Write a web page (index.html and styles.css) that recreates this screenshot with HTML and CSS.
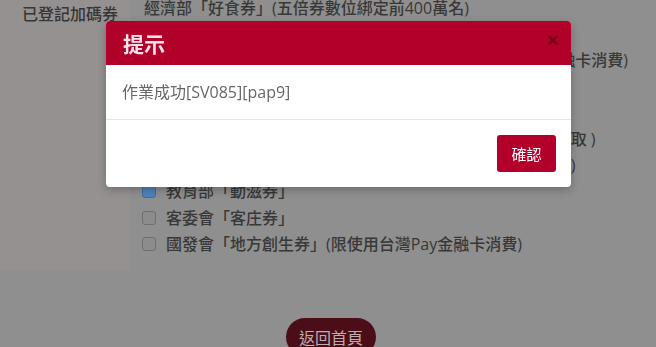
FILE: index.html
```html
<!DOCTYPE html>
<html lang="zh-Hant">
<head>
<meta charset="utf-8">
<title>提示</title>
<link rel="stylesheet" href="styles.css">
</head>
<body>
<div class="page">
  <div class="left">
    <div class="label">已登記加碼券</div>
  </div>
  <div class="right">
    <div class="row">經濟部「好食券」(五倍券數位綁定前400萬名)</div>
    <div class="row">農業部「農遊券」</div>
    <div class="row">經濟部「好食券」(五倍券數位綁定加碼，限使用台灣Pay金融卡消費)</div>
    <div class="row">文化部「藝FUN券」(數位)</div>
    <div class="row">可登記加碼券</div>
    <div class="row check"><span class="box"></span>文化部「藝FUN券」(紙本，限於指定全國各地超商門市領取 )</div>
    <div class="row check"><span class="box"></span>內政部「國旅券」(限於國內合法旅宿業者及觀光遊樂業用)</div>
    <div class="row check"><span class="box checked"></span>教育部「動滋券」</div>
    <div class="row check"><span class="box"></span>客委會「客庄券」</div>
    <div class="row check"><span class="box"></span>國發會「地方創生券」(限使用台灣Pay金融卡消費)</div>
  </div>
</div>
<div class="actions">
  <button class="home">返回首頁</button>
</div>

<div class="modal">
  <div class="modal-header">
    <div class="modal-title">提示</div>
    <span class="close">×</span>
  </div>
  <div class="modal-body">作業成功[SV085][pap9]</div>
  <div class="modal-footer">
    <button class="ok">確認</button>
  </div>
</div>
</body>
</html>
```
FILE: styles.css
```css
* { box-sizing: border-box; }
html, body { margin: 0; padding: 0; }
body {
  background: #8f8f8f;
  font-family: "Open Sans", "Noto Sans CJK TC", sans-serif;
  width: 656px;
  height: 347px;
  overflow: hidden;
}
.page {
  display: grid;
  grid-template-columns: 130px 1fr;
  margin-top: -5px;
}
.left {
  background: #959190;
  padding: 6px 0 0 22px;
}
.label {
  font-size: 16px;
  font-weight: 500;
  line-height: 26px;
  color: #363636;
  white-space: nowrap;
}
.right {
  padding: 0 0 13px 14px;
}
.row {
  font-size: 16px;
  font-weight: 500;
  line-height: 26.2px;
  height: 26.2px;
  color: #383838;
  white-space: nowrap;
}
.row.check {
  display: flex;
  align-items: center;
  gap: 10px;
  margin-left: -2px;
}
.box {
  width: 14px;
  height: 14px;
  border: 1px solid #6e6e6e;
  border-radius: 3px;
  background: #8c8c8c;
  flex: none;
}
.box.checked {
  background: #4f82bb;
  border-color: #3f6d9f;
}
.actions {
  display: flex;
  justify-content: center;
  padding-left: 6px;
  margin-top: 48px;
}
.home {
  width: 90px;
  height: 38px;
  border: none;
  border-radius: 19px;
  background: #4b0d18;
  color: #bdb0b2;
  font-family: "Noto Sans CJK TC", sans-serif;
  font-size: 16px;
  line-height: 38px;
  padding: 0;
}
.modal {
  position: fixed;
  left: 106px;
  top: 21px;
  width: 465px;
  background: #fff;
  border-radius: 4px;
  overflow: hidden;
  box-shadow: 0 3px 9px rgba(0,0,0,0.25);
}
.modal-header {
  height: 44px;
  background: #b1002a;
  display: flex;
  align-items: center;
  justify-content: space-between;
  padding: 0 12px 0 17px;
}
.modal-title {
  font-family: "Noto Sans CJK TC", sans-serif;
  font-size: 21px;
  font-weight: 700;
  color: #fbe4e9;
  line-height: 44px;
}
.close {
  font-family: "Liberation Sans", sans-serif;
  font-size: 21px;
  font-weight: 700;
  color: #76001c;
  line-height: 1;
  align-self: flex-start;
  margin-top: 8px;
}
.modal-body {
  padding: 16px;
  font-size: 16px;
  line-height: 22px;
  color: #666;
  border-bottom: 1px solid #e5e5e5;
}
.modal-footer {
  display: flex;
  justify-content: flex-end;
  padding: 15px;
}
.ok {
  width: 59px;
  height: 37px;
  border: none;
  border-radius: 3px;
  background: #b3002b;
  color: #fff;
  font-family: "Noto Sans CJK TC", sans-serif;
  font-size: 15px;
  padding: 0;
}
```
